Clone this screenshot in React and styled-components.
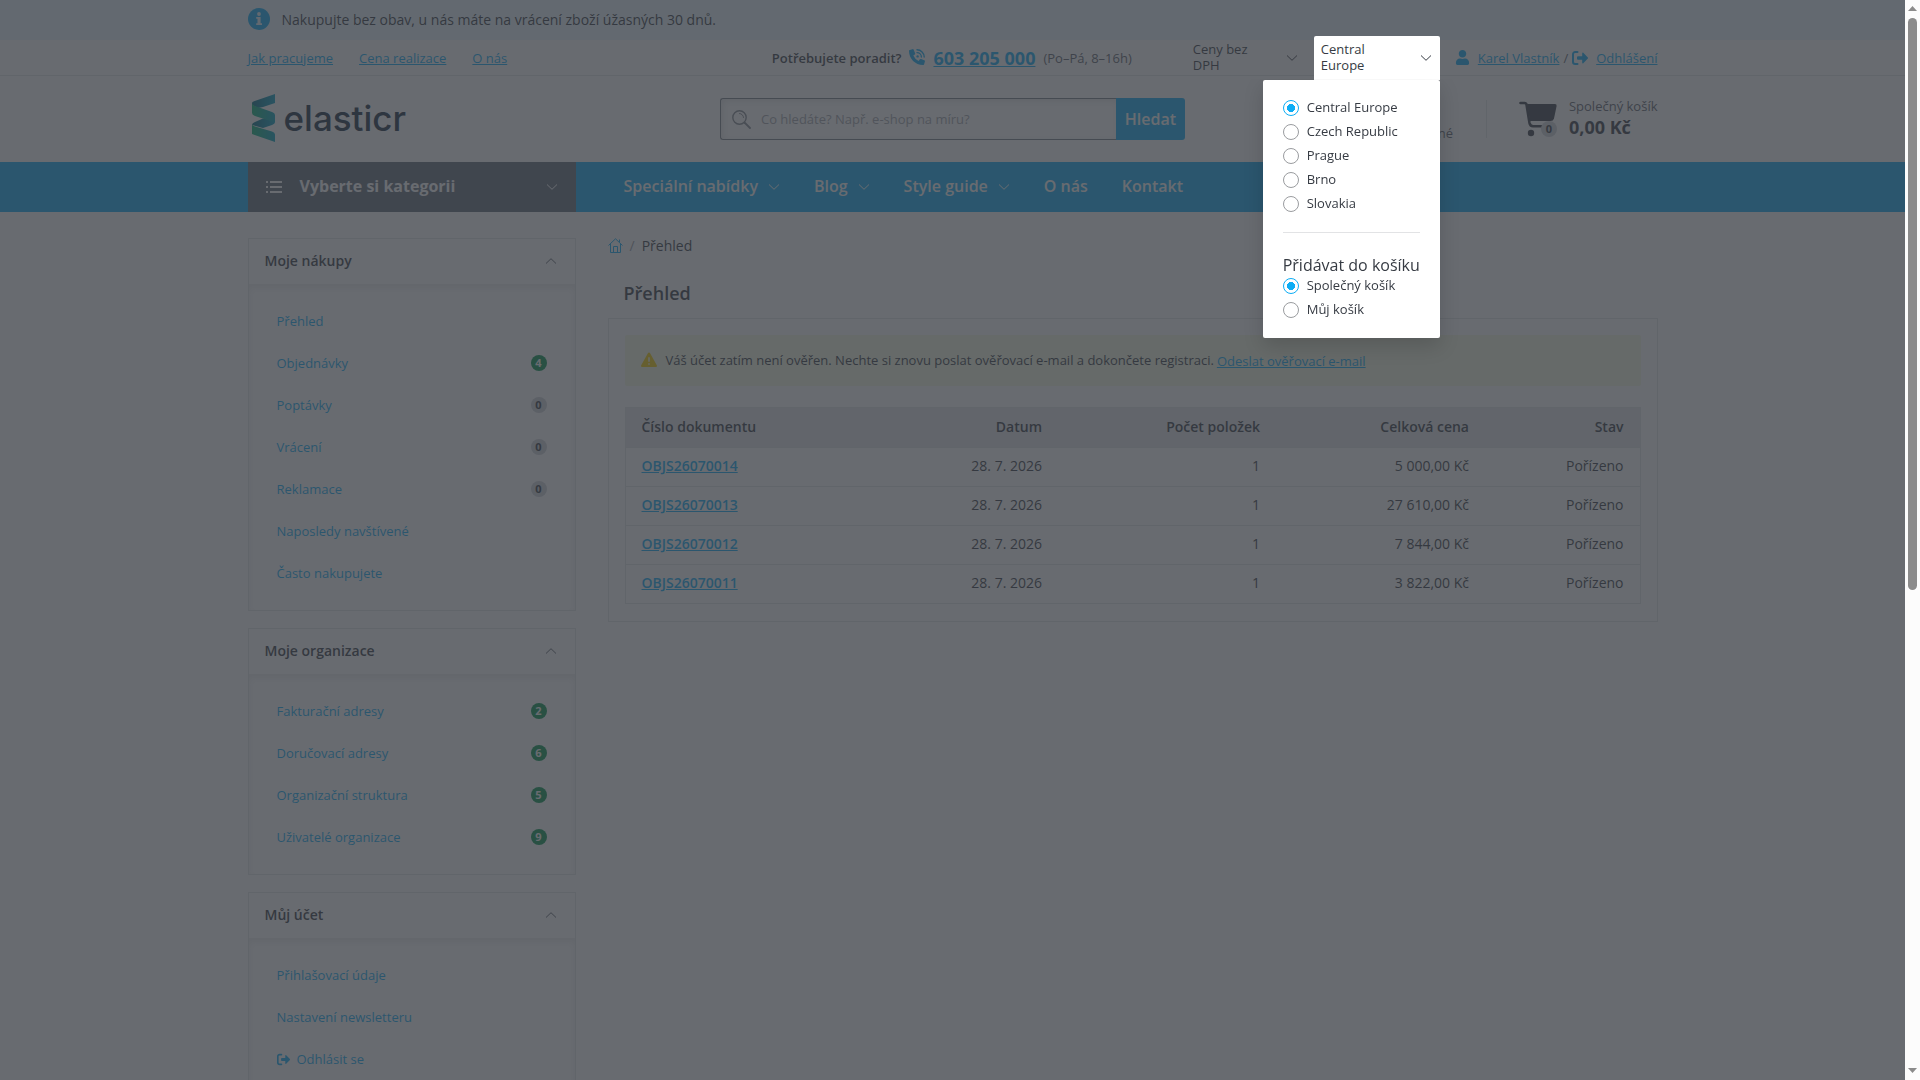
import React from "react";
import styled, { createGlobalStyle, css } from "styled-components";
import { FaUser } from "react-icons/fa";

const c = {
  blue: "#0cadf5",
  text: "#363b43",
  muted: "#5c626b",
  line: "#e3e5e8",
  green: "#04944e",
  notice: "#ebf8ff",
  warning: "#f5f9e4",
};

const Global = createGlobalStyle`
  *, *::before, *::after { box-sizing: border-box; }
  html, body { height: 100%; }
  body {
    margin: 0;
    overflow: hidden;
    background: #fff;
    color: ${c.text};
    font: 400 14px/24px "Open Sans", "Noto Sans", sans-serif;
  }
  button, input { font: inherit; color: inherit; }
  button { border: 0; padding: 0; background: none; cursor: pointer; }
  ul { list-style: none; margin: 0; padding: 0; }
  h1, h2, p { margin: 0; font: inherit; }
  svg { display: block; flex: none; }
`;

const Shell = styled.div`
  display: grid;
  grid-template-columns: minmax(0, 1fr) 15px;
  height: 100vh;
`;
const Viewport = styled.div`
  overflow: hidden;
`;
const Overlay = styled.div`
  position: fixed;
  inset: 0 15px 0 0;
  z-index: 10;
  pointer-events: none;
  background: rgba(54, 57, 64, 0.75);
`;
const Container = styled.div`
  max-width: 1410px;
  margin: 0 auto;
  display: flex;
  align-items: center;
`;

const Notice = styled.div`
  background: ${c.notice};
`;
const NoticeInner = styled(Container)`
  height: 40px;
  gap: 12px;
  svg { margin-bottom: 2px; }
`;

const UtilityBar = styled.div`
  border-bottom: 1px solid ${c.line};
`;
const UtilityInner = styled(Container)`
  height: 35px;
  font-size: 13px;
`;
const Link = styled.a`
  color: ${c.blue};
  text-decoration: underline;
`;
const QuickLinks = styled.nav`
  display: flex;
  gap: 26px;
  margin-right: auto;
`;
const Helpline = styled.div`
  display: flex;
  align-items: center;
  gap: 8px;
  margin-right: 54px;
  font-weight: 600;
  svg { margin-bottom: 2px; }
`;
const Phone = styled(Link)`
  font-size: 18px;
  font-weight: 700;
`;
const Hours = styled.span`
  color: ${c.muted};
  font-weight: 500;
`;
const Switcher = styled.div`
  position: relative;
  margin-right: 8px;
  ${(p) => p.$open && css`
    z-index: 20;
    margin-right: 15px;
  `}
`;
const SwitchButton = styled.button`
  display: flex;
  align-items: center;
  justify-content: space-between;
  width: ${(p) => (p.$open ? 126 : 120)}px;
  height: 44px;
  padding: 0 9px 2px 7px;
  border-radius: 2px 2px 0 0;
  background: ${(p) => (p.$open ? "#fff" : "none")};
  text-align: left;
  line-height: 16px;
  span { width: 70px; }
  svg { margin-top: 2px; }
`;
const Dropdown = styled.div`
  position: absolute;
  top: 100%;
  right: 0;
  padding: 16px 20px;
  border-radius: 2px;
  background: #fff;
  box-shadow: 0 8px 20px rgba(0, 0, 0, 0.15);
  white-space: nowrap;
  clip-path: inset(0 -30px -40px -30px);
`;
const Choices = styled.fieldset`
  margin: 0;
  padding: 0;
  border: 0;
  & + & {
    margin-top: 16px;
    padding-top: 24px;
    border-top: 1px solid #e2e3e5;
  }
  legend {
    float: left;
    width: 100%;
    padding: 0;
    font-size: 16px;
    line-height: 17px;
  }
`;
const Choice = styled.label`
  display: flex;
  clear: both;
  align-items: flex-start;
  gap: 8px;
  height: 24px;
  line-height: 22px;
`;
const Radio = styled.input`
  appearance: none;
  width: 16px;
  height: 16px;
  margin: 4px 0 0;
  border: 1px solid #9a9c9f;
  border-radius: 50%;
  &:checked {
    border-color: ${c.blue};
    background: radial-gradient(circle, ${c.blue} 0 4px, #fff 4px);
  }
`;
const Account = styled.div`
  display: flex;
  align-items: center;
  gap: 4px;
  color: ${c.muted};
  svg { color: ${c.blue}; }
  svg:first-child { margin-right: 4px; }
  svg + a + span + svg { margin-right: 4px; }
`;

const Header = styled(Container).attrs({ as: "header" })`
  height: 86px;
`;
const Logo = styled.a`
  display: flex;
  align-items: center;
  gap: 8px;
  padding: 0 0 2px 4px;
  color: #182c40;
  text-decoration: none;
  font: 500 35px/46px Inter, "Open Sans", sans-serif;
`;
const Search = styled.form`
  display: flex;
  width: 465px;
  height: 42px;
  margin-left: auto;
`;
const SearchField = styled.label`
  display: flex;
  flex: 1;
  align-items: center;
  gap: 10px;
  padding-left: 11px;
  border: 1px solid #7a8089;
  border-right: 0;
  border-radius: 3px 0 0 3px;
  box-shadow: inset 2px 2px 6px rgba(54, 59, 67, 0.15);
  color: #858a92;
  input {
    flex: 1;
    border: 0;
    padding: 0;
    outline: 0;
    background: none;
    font-size: 13px;
  }
  input::placeholder { color: #a2a5ab; opacity: 1; }
`;
const SearchButton = styled.button`
  width: 69px;
  border-radius: 0 3px 3px 0;
  background: ${c.blue};
  color: #fff;
  font-size: 16px;
  font-weight: 600;
`;
const Favourites = styled.a`
  display: flex;
  align-items: flex-end;
  justify-content: flex-end;
  width: 268px;
  height: 44px;
  color: ${c.muted};
  font-size: 13px;
  line-height: 16px;
  text-decoration: none;
`;
const Cart = styled.a`
  display: flex;
  align-items: center;
  gap: 12px;
  height: 38px;
  margin-left: 33px;
  padding-left: 32px;
  border-left: 1px solid ${c.line};
  color: ${c.muted};
  font-size: 13px;
  text-decoration: none;
`;
const CartSummary = styled.span`
  padding-bottom: 4px;
  line-height: 20px;
  strong {
    display: block;
    color: ${c.text};
    font-size: 18px;
    line-height: 23px;
  }
`;
const CartIcon = styled.span`
  position: relative;
  color: ${c.text};
`;
const Badge = styled.span`
  display: grid;
  place-items: center;
  width: 16px;
  height: 16px;
  border-radius: 50%;
  background: ${(p) => (p.$active ? c.green : "#ced1d6")};
  color: ${(p) => (p.$active ? "#fff" : c.text)};
  font-size: 11px;
  font-weight: 700;
  line-height: 16px;
`;
const CartBadge = styled(Badge)`
  position: absolute;
  right: 0;
  bottom: 0;
`;

const NavBar = styled.div`
  background: ${c.blue};
`;
const NavInner = styled(Container)`
  height: 50px;
  color: #fff;
  font-size: 16px;
  font-weight: 600;
  svg { margin-top: 2px; }
`;
const Categories = styled.button`
  display: flex;
  align-items: center;
  gap: 18px;
  width: 328px;
  height: 100%;
  padding: 0 19px 2px 18px;
  background: #606b7a;
  font-weight: 700;
  svg:last-child { margin-left: auto; }
`;
const MainNav = styled.nav`
  display: flex;
  gap: 34px;
  padding: 0 0 2px 48px;
  a {
    display: flex;
    align-items: center;
    gap: 11px;
    color: inherit;
    text-decoration: none;
  }
  svg { margin-right: 1px; }
`;

const Page = styled(Container)`
  align-items: flex-start;
  gap: 32px;
`;
const Sidebar = styled.aside`
  display: grid;
  flex: none;
  gap: 17px;
  width: 328px;
  padding-top: 26px;
`;
const Panel = styled.section`
  border: 1px solid ${c.line};
`;
const PanelHead = styled.button`
  display: flex;
  align-items: center;
  justify-content: space-between;
  width: 100%;
  height: 45px;
  padding: 0 19px 2px 16px;
  font-weight: 600;
  svg { color: ${c.muted}; }
`;
const PanelList = styled.ul`
  padding: 16px 28px;
  box-shadow: inset 0 4px 6px rgba(54, 59, 67, 0.1);
  font-size: 13px;
  li {
    display: flex;
    align-items: center;
    justify-content: space-between;
    height: 42px;
  }
  a {
    display: flex;
    align-items: center;
    gap: 7px;
    color: ${c.blue};
    text-decoration: none;
  }
`;

const Main = styled.main`
  flex: 1;
  min-width: 0;
`;
const Breadcrumb = styled.nav`
  display: flex;
  align-items: center;
  gap: 7px;
  padding-top: 22px;
  a { padding-bottom: 2px; color: ${c.blue}; }
  i { color: #9a9ea5; font-style: normal; }
`;
const Title = styled.h1`
  padding: 23px 16px 13px;
  font-size: 18px;
  font-weight: 600;
`;
const Box = styled.section`
  padding: 16px 16px 17px;
  border: 1px solid ${c.line};
`;
const Alert = styled.p`
  display: flex;
  align-items: center;
  height: 51px;
  margin-bottom: 21px;
  padding: 0 16px;
  border-radius: 2px;
  background: ${c.warning};
  font-size: 13px;
  span { padding-bottom: 2px; }
  svg { margin: 0 9px 2px 0; color: #f8d000; }
  a { margin-left: 3px; }
`;
const Table = styled.table`
  width: 100%;
  table-layout: fixed;
  border-collapse: collapse;
  border: 1px solid ${c.line};
  th, td {
    height: 39px;
    padding: 0 16px 2px;
    border-bottom: 1px solid ${c.line};
    text-align: right;
  }
  th { height: 40px; background: #e6e7ea; font-weight: 600; }
  th:first-child, td:first-child { text-align: left; }
  td a { font-weight: 600; }
`;
const Col = styled.col`
  width: ${(p) => (p.$w ? `${p.$w}px` : "auto")};
`;

const Scrollbar = styled.div`
  display: flex;
  flex-direction: column;
  align-items: center;
  justify-content: space-between;
  padding: 6px 0 7px;
  background: #fcfcfc;
  color: #8b8b8b;
`;
const Thumb = styled.div`
  width: 9px;
  height: 572px;
  margin: 7px 0 auto;
  border-radius: 5px;
  background: currentColor;
`;

const Chevron = ({ up }) => (
  <svg width="10" height="6" viewBox="0 0 10 6" fill="none" stroke="currentColor" strokeWidth="1">
    <path d={up ? "M0 5.5 5 .7l5 4.8" : "M0 .5l5 4.8L10 .5"} />
  </svg>
);
const InfoIcon = () => (
  <svg width="22" height="22" viewBox="0 0 22 22">
    <circle cx="11" cy="11" r="11" fill={c.blue} />
    <circle cx="11" cy="6" r="1.900" fill={c.notice} />
    <path d="M8.200 9h4.400v6.200H14V17H8.200v-1.800h1.300v-4.400H8.200z" fill={c.notice} />
  </svg>
);
const PhoneIcon = () => (
  <svg width="16" height="16" viewBox="0 0 16 16" fill="none">
    <path d="M3.400.2.8.9A1 1 0 0 0 0 2c0 7.700 6.300 14 14 14a1 1 0 0 0 1.100-.8l.8-2.700a1 1 0 0 0-.6-1.200l-3.200-1.300a1 1 0 0 0-1.200.3L9.600 12A10.500 10.500 0 0 1 4.300 6.600l1.500-1.200a1 1 0 0 0 .3-1.200L4.700.8A1 1 0 0 0 3.400.2Z" fill={c.blue} />
    <path d="M8 .8A7.200 7.200 0 0 1 15.200 8M8 3.600A4.400 4.400 0 0 1 12.400 8" stroke={c.blue} strokeWidth="1.400" strokeLinecap="round" />
    <circle cx="8.600" cy="7.400" r="1.200" fill={c.blue} />
  </svg>
);
const LogoutIcon = ({ size = 16 }) => (
  <svg width={size} height={size} viewBox="0 0 16 16" fill="none">
    <path d="M5.500 2H3.200A2.200 2.200 0 0 0 1 4.200v7.600A2.200 2.200 0 0 0 3.200 14h2.300" stroke="currentColor" strokeWidth="2" strokeLinecap="round" />
    <path d="M10.200 3.200v3H6a1 1 0 0 0-1 1v1.600a1 1 0 0 0 1 1h4.200v3c0 .6.700.8 1.100.4l4.300-4.400a1.100 1.100 0 0 0 0-1.600l-4.300-4.400c-.4-.4-1.100-.2-1.100.4Z" fill="currentColor" />
  </svg>
);
const SearchIcon = () => (
  <svg width="19" height="19" viewBox="0 0 19 19" fill="none" stroke="currentColor" strokeLinecap="round">
    <circle cx="7.500" cy="7.500" r="6.700" strokeWidth="1.400" />
    <path d="M12.500 12.500 18 18" strokeWidth="1.800" />
    <path d="M7.500 3.500a4 4 0 0 1 4 4" />
  </svg>
);
const LogoMark = () => (
  <svg width="24" height="48" viewBox="0 0 24 48">
    <defs>
      <linearGradient id="ribbon"><stop stopColor="#0bb574" /><stop offset="1" stopColor="#06a2c0" /></linearGradient>
      <linearGradient id="fold"><stop stopColor="#056a80" /><stop offset="1" stopColor="#08a0c4" /></linearGradient>
    </defs>
    <path d="M0 9Q0 8 2 7.300L23 0v9L11 13 6 14 0 11z" fill="url(#fold)" />
    <path d="M0 31q0-2 3-3l8-3.500 12 1v2.500q0 2-3 3l-9 3z" fill="url(#fold)" />
    <path d="M0 9q0 2 3 3l17 6q3 1 3 3v7.500L3 22Q0 21 0 19z" fill="url(#ribbon)" />
    <path d="M0 30q0 1.500 3 2.500l17 5q3 1 3 3v7.500L0 40z" fill="url(#ribbon)" />
  </svg>
);
const ListIcon = () => (
  <svg width="16" height="12" viewBox="0 0 16 12" fill="currentColor">
    <path d="M0 0h2v2H0zM4 0h12v2H4zM0 5h2v2H0zM4 5h12v2H4zM0 10h2v2H0zM4 10h12v2H4z" />
  </svg>
);
const CartGlyph = () => (
  <svg width="38" height="36" viewBox="0 0 38 36" fill="none">
    <path d="M1.500 2h4q1.700 0 2 1.600l3 18.400q.6 3.200 3.500 3.200h17" stroke="currentColor" strokeWidth="2.600" strokeLinecap="round" />
    <path d="M8 3h28q2 0 1.600 2L35 17.500q-.7 2.500-3.500 2.500H11z" fill="currentColor" />
    <circle cx="12" cy="32" r="3.200" fill="currentColor" />
  </svg>
);
const HomeIcon = () => (
  <svg width="15" height="15" viewBox="0 0 15 15" fill="none" stroke="currentColor">
    <path d="M.5 7.500 7.500.8l7 6.700M2.500 6v8.500h10V6M11.500 4V1.500M5.500 14.500v-6h4v6" />
  </svg>
);
const WarningIcon = () => (
  <svg width="16" height="16" viewBox="0 0 16 16">
    <path d="M6.900 1.200a1.300 1.300 0 0 1 2.200 0l6.700 12a1.200 1.200 0 0 1-1.100 1.800H1.300a1.200 1.200 0 0 1-1.100-1.800z" fill="currentColor" />
    <path d="M7.200 5.300h1.600v4.500H7.200zM7.200 11.200h1.600v1.600H7.200z" fill={c.warning} />
  </svg>
);
const Arrow = ({ down }) => (
  <svg width="9" height="5" viewBox="0 0 9 5" fill="currentColor">
    <path d={down ? "M0 0h9L4.500 5z" : "M0 5h9L4.500 0z"} />
  </svg>
);

const panels = [
  { title: "Moje nákupy", items: [["Přehled"], ["Objednávky", 4], ["Poptávky", 0], ["Vrácení", 0], ["Reklamace", 0], ["Naposledy navštívené"], ["Často nakupujete"]] },
  { title: "Moje organizace", items: [["Fakturační adresy", 2], ["Doručovací adresy", 6], ["Organizační struktura", 5], ["Uživatelé organizace", 9]] },
  { title: "Můj účet", items: [["Přihlašovací údaje"], ["Nastavení newsletteru"], ["Odhlásit se"]] },
];
const orders = [
  ["OBJS26070014", "5 000,00 Kč"],
  ["OBJS26070013", "27 610,00 Kč"],
  ["OBJS26070012", "7 844,00 Kč"],
  ["OBJS26070011", "3 822,00 Kč"],
];
const regions = ["Central Europe", "Czech Republic", "Prague", "Brno", "Slovakia"];
const carts = ["Společný košík", "Můj košík"];
const nav = [["Speciální nabídky", true], ["Blog", true], ["Style guide", true], ["O nás"], ["Kontakt"]];

const RadioList = ({ name, options }) =>
  options.map((o, i) => (
    <Choice key={o}>
      <Radio type="radio" name={name} defaultChecked={i === 0} />
      {o}
    </Choice>
  ));

export default function App() {
  return (
    <>
      <Global />
      <Shell>
        <Viewport>
          <Notice>
            <NoticeInner>
              <InfoIcon />
              <p>Nakupujte bez obav, u nás máte na vrácení zboží úžasných 30 dnů.</p>
            </NoticeInner>
          </Notice>
          <UtilityBar>
            <UtilityInner>
              <QuickLinks>
                <Link href="#">Jak pracujeme</Link>
                <Link href="#">Cena realizace</Link>
                <Link href="#">O nás</Link>
              </QuickLinks>
              <Helpline>
                <span>Potřebujete poradit?</span>
                <PhoneIcon />
                <Phone href="tel:603205000">603 205 000</Phone>
                <Hours>(Po–Pá, 8–16h)</Hours>
              </Helpline>
              <Switcher>
                <SwitchButton type="button"><span>Ceny bez DPH</span><Chevron /></SwitchButton>
              </Switcher>
              <Switcher $open>
                <SwitchButton type="button" $open aria-expanded="true"><span>Central Europe</span><Chevron /></SwitchButton>
                <Dropdown>
                  <Choices>
                    <RadioList name="region" options={regions} />
                  </Choices>
                  <Choices>
                    <legend>Přidávat do košíku</legend>
                    <RadioList name="cart" options={carts} />
                  </Choices>
                </Dropdown>
              </Switcher>
              <Account>
                <FaUser size={15} />
                <Link href="#">Karel Vlastník</Link>
                <span>/</span>
                <LogoutIcon />
                <Link href="#">Odhlášení</Link>
              </Account>
            </UtilityInner>
          </UtilityBar>
          <Header>
            <Logo href="#"><LogoMark />elasticr</Logo>
            <Search>
              <SearchField>
                <SearchIcon />
                <input type="search" aria-label="Hledat" placeholder="Co hledáte? Např. e-shop na míru?" />
              </SearchField>
              <SearchButton type="button">Hledat</SearchButton>
            </Search>
            <Favourites href="#">Oblíbené</Favourites>
            <Cart href="#">
              <CartIcon><CartGlyph /><CartBadge>0</CartBadge></CartIcon>
              <CartSummary>Společný košík<strong>0,00 Kč</strong></CartSummary>
            </Cart>
          </Header>
          <NavBar>
            <NavInner>
              <Categories type="button"><ListIcon />Vyberte si kategorii<Chevron /></Categories>
              <MainNav>
                {nav.map(([label, more]) => (
                  <a href="#" key={label}>{label}{more && <Chevron />}</a>
                ))}
              </MainNav>
            </NavInner>
          </NavBar>
          <Page>
            <Sidebar>
              {panels.map((p) => (
                <Panel key={p.title}>
                  <PanelHead type="button">{p.title}<Chevron up /></PanelHead>
                  <PanelList>
                    {p.items.map(([label, count]) => (
                      <li key={label}>
                        <a href="#">{label === "Odhlásit se" && <LogoutIcon size={13} />}{label}</a>
                        {count !== undefined && <Badge $active={count > 0}>{count}</Badge>}
                      </li>
                    ))}
                  </PanelList>
                </Panel>
              ))}
            </Sidebar>
            <Main>
              <Breadcrumb>
                <a href="#" aria-label="Domů"><HomeIcon /></a>
                <i>/</i>
                <span>Přehled</span>
              </Breadcrumb>
              <Title>Přehled</Title>
              <Box>
                <Alert>
                  <WarningIcon />
                  <span>Váš účet zatím není ověřen. Nechte si znovu poslat ověřovací e-mail a dokončete registraci.</span>
                  <Link href="#">Odeslat ověřovací e-mail</Link>
                </Alert>
                <Table>
                  <colgroup>
                    <Col /><Col $w={213} /><Col $w={218} /><Col $w={209} /><Col $w={155} />
                  </colgroup>
                  <thead>
                    <tr><th>Číslo dokumentu</th><th>Datum</th><th>Počet položek</th><th>Celková cena</th><th>Stav</th></tr>
                  </thead>
                  <tbody>
                    {orders.map(([id, price]) => (
                      <tr key={id}>
                        <td><Link href="#">{id}</Link></td>
                        <td>28. 7. 2026</td>
                        <td>1</td>
                        <td>{price}</td>
                        <td>Pořízeno</td>
                      </tr>
                    ))}
                  </tbody>
                </Table>
              </Box>
            </Main>
          </Page>
        </Viewport>
        <Scrollbar><Arrow /><Thumb /><Arrow down /></Scrollbar>
      </Shell>
      <Overlay />
    </>
  );
}
